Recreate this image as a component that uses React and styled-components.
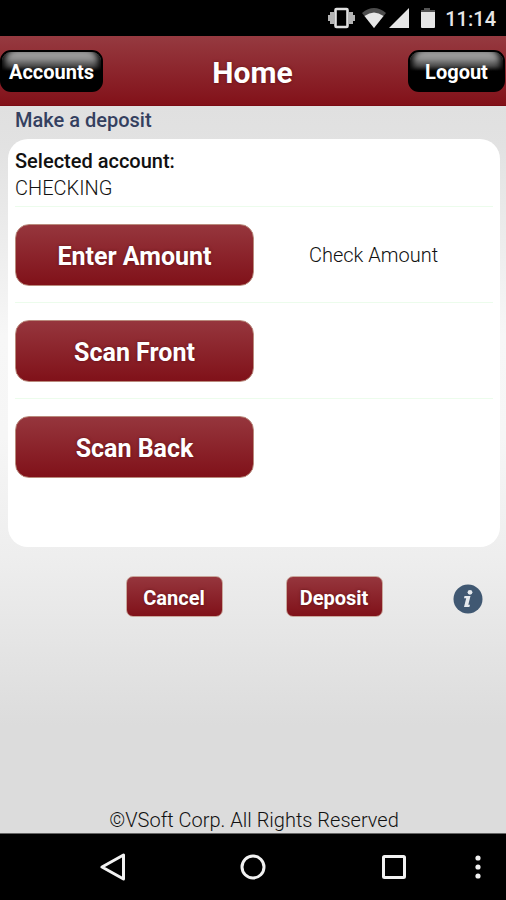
import React from "react";
import styled, { createGlobalStyle } from "styled-components";

const GlobalStyle = createGlobalStyle`
  * {
    box-sizing: border-box;
  }

  body {
    margin: 0;
    background-color: #dcdcdc;
    color: #111;
    font-family: Roboto, "Liberation Sans", sans-serif;
    font-size: 20px;
    font-weight: 300;
  }

  button {
    font-family: inherit;
    cursor: pointer;
  }
`;

const Screen = styled.div`
  min-height: 100vh;
  display: flex;
  flex-direction: column;
`;

const StatusBar = styled.div`
  height: 36px;
  padding: 2px 10px 0 0;
  display: flex;
  align-items: center;
  justify-content: flex-end;
  background-color: #000;
  color: #e6e6e6;
`;

const StatusIcons = styled.svg`
  width: 110px;
  height: 36px;
  margin-right: 8px;
`;

const Clock = styled.span`
  font-size: 20px;
  font-weight: 500;
`;

const Header = styled.header`
  height: 70px;
  display: grid;
  grid-template-columns: 1fr auto 1fr;
  align-items: center;
  padding-right: 1px;
  background: linear-gradient(#963a40, #821119);
  border-bottom: 1px solid #7a0c14;
`;

const HeaderTitle = styled.h1`
  margin: 0;
  padding-top: 4px;
  color: #fff;
  font-size: 30px;
  font-weight: 700;
  text-shadow: 0 0 3px rgba(60, 0, 0, 0.6);
`;

const GlossButton = styled.button`
  justify-self: ${(props) => props.$side};
  height: 42px;
  padding: 2px 7px 0;
  min-width: 97px;
  border: 2px solid #000;
  border-radius: 11px;
  background: linear-gradient(
    #a8a8a8 0,
    #8c8c8c 7px,
    #4a4a4a 14px,
    #000 19px
  );
  box-shadow: inset 7px 0 6px -4px #000, inset -7px 0 6px -4px #000;
  color: #fff;
  font-size: 20px;
  font-weight: 700;
`;

const Main = styled.main`
  flex: 1;
  display: flex;
  flex-direction: column;
  padding: 0 6px 0 8px;
  background: linear-gradient(
    #e0e0e0 0,
    #e2e2e2 40px,
    #f7f7f7 230px,
    #f6f6f6 330px,
    #eeeeee 450px,
    #dcdcdc 620px
  );
`;

const SectionTitle = styled.h2`
  margin: 0;
  padding: 0 7px;
  height: 33px;
  line-height: 28px;
  color: #34405f;
  font-size: 20px;
  font-weight: 500;
`;

const Card = styled.section`
  padding: 9px 7px 53px;
  border-radius: 20px;
  background-color: #fff;
`;

const Account = styled.dl`
  margin: 0;
  padding-bottom: 4px;
  line-height: 27px;

  dt {
    font-weight: 500;
  }

  dd {
    margin: 0;
  }
`;

const StepRow = styled.div`
  display: grid;
  grid-template-columns: 1fr 1fr;
  align-items: center;
  padding: 17px 0 16px;
  border-top: 1px solid #ecfcec;
`;

const StepValue = styled.span`
  text-align: center;
`;

const RedButton = styled.button`
  height: ${(props) => (props.$large ? "62px" : "41px")};
  min-width: 97px;
  padding: 2px 8px 0;
  border: 1px solid ${(props) => (props.$large ? "#b98a7c" : "#c9a79c")};
  border-radius: ${(props) => (props.$large ? "14px" : "7px")};
  background: linear-gradient(#96363d, #801119);
  color: #fff;
  font-size: ${(props) => (props.$large ? "25px" : "20px")};
  font-weight: 700;
  text-shadow: 0 0 3px rgba(60, 0, 0, 0.5);
`;

const Actions = styled.div`
  display: grid;
  grid-template-columns: 1fr auto auto 1fr;
  align-items: center;
  padding: 29px 17px 0;
`;

const InfoButton = styled.button`
  grid-column: 4;
  justify-self: end;
  padding: 4px 0 0;
  border: none;
  background: transparent;

  svg {
    display: block;
  }
`;

const CancelButton = styled(RedButton)`
  grid-column: 2;
  margin-right: 63px;
`;

const Footer = styled.footer`
  margin-top: auto;
  text-align: center;
  line-height: 25px;
`;

const NavBar = styled.nav`
  height: 67px;
  padding: 0 14px 0 43px;
  display: grid;
  grid-template-columns: 1fr 1fr 1fr 28px;
  place-items: center;
  background-color: #000;
  border-top: 1px solid #666;
`;

const NavButton = styled.button`
  padding: 0;
  border: none;
  background: transparent;

  svg {
    display: block;
    fill: none;
    stroke: #f2f2f2;
    stroke-width: 3;
    stroke-linejoin: round;
  }
`;

const steps = [
  { label: "Enter Amount", value: "Check Amount" },
  { label: "Scan Front" },
  { label: "Scan Back" },
];

function DeviceStatus() {
  return (
    <StatusBar>
      <StatusIcons viewBox="0 0 110 36" fill="#e6e6e6" aria-hidden="true">
        {/* vibrate */}
        <path
          d="M1 14h2v6H1zM3 11h4v12H3zM22 11h4v12h-4zM26 14h2v6h-2z"
          fill="#b4b4b4"
        />
        <rect
          x="8.5"
          y="8"
          width="12"
          height="18"
          rx="1"
          fill="none"
          stroke="#e0e0e0"
          strokeWidth="2.6"
        />
        {/* wifi */}
        <path d="M35 12Q47 2 59 12L47 27Z" fill="#4c4c4c" />
        <path d="M37.5 15Q47 8 56.500 15L47 27Z" />
        {/* signal */}
        <path d="M82 7V27H62Z" />
        {/* battery */}
        <path d="M97 7h6v2h5v3H94V9h3z" fill="#555" />
        <path d="M94 11h14v15a1 1 0 0 1-1 1H95a1 1 0 0 1-1-1z" />
      </StatusIcons>
      <Clock>11:14</Clock>
    </StatusBar>
  );
}

function DeviceNav() {
  return (
    <NavBar>
      <NavButton aria-label="Back">
        <svg width="28" height="28" viewBox="0 0 28 28">
          <path d="M24.500 2v24L3 14z" />
        </svg>
      </NavButton>
      <NavButton aria-label="Home">
        <svg width="28" height="28" viewBox="0 0 28 28">
          <circle cx="14" cy="14" r="11" />
        </svg>
      </NavButton>
      <NavButton aria-label="Recent apps">
        <svg width="28" height="28" viewBox="0 0 28 28">
          <rect x="3.500" y="3.500" width="21" height="21" rx="1" />
        </svg>
      </NavButton>
      <NavButton aria-label="More options">
        <svg width="8" height="28" viewBox="0 0 8 28">
          <g fill="#f2f2f2" stroke="none">
            <circle cx="4" cy="5" r="2.600" />
            <circle cx="4" cy="14" r="2.600" />
            <circle cx="4" cy="23" r="2.600" />
          </g>
        </svg>
      </NavButton>
    </NavBar>
  );
}

function App() {
  return (
    <Screen>
      <GlobalStyle />
      <DeviceStatus />
      <Header>
        <GlossButton $side="start">Accounts</GlossButton>
        <HeaderTitle>Home</HeaderTitle>
        <GlossButton $side="end">Logout</GlossButton>
      </Header>
      <Main>
        <SectionTitle>Make a deposit</SectionTitle>
        <Card>
          <Account>
            <dt>Selected account:</dt>
            <dd>CHECKING</dd>
          </Account>
          {steps.map((step) => (
            <StepRow key={step.label}>
              <RedButton $large>{step.label}</RedButton>
              {step.value && <StepValue>{step.value}</StepValue>}
            </StepRow>
          ))}
        </Card>
        <Actions>
          <CancelButton>Cancel</CancelButton>
          <RedButton>Deposit</RedButton>
          <InfoButton aria-label="Information">
            <svg width="30" height="30" viewBox="0 0 30 30">
              <circle cx="15" cy="15" r="14.500" fill="#405872" />
              <circle cx="17" cy="8.300" r="2.400" fill="#e6eaee" />
              <path
                d="M11.500 12h6l-2.200 8.800h1.700l-.6 2.200h-5.400l2.200-8.800h-2.200z"
                fill="#e6eaee"
              />
            </svg>
          </InfoButton>
        </Actions>
        <Footer>©VSoft Corp. All Rights Reserved</Footer>
      </Main>
      <DeviceNav />
    </Screen>
  );
}

export default App;
